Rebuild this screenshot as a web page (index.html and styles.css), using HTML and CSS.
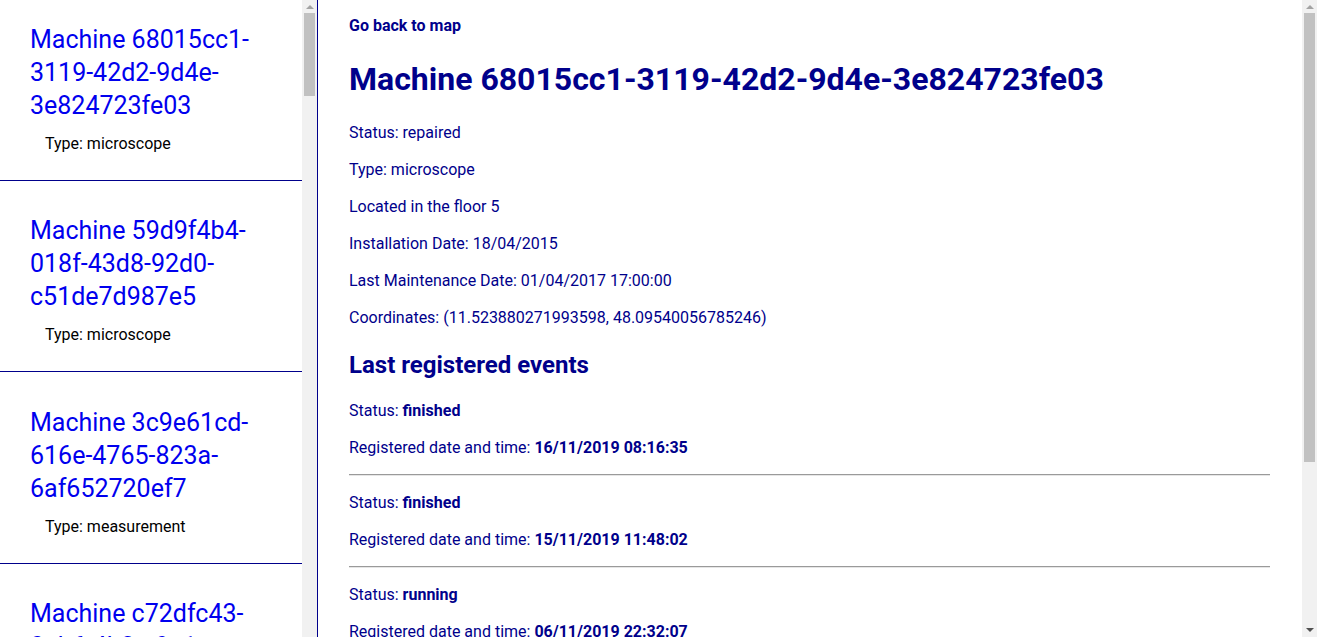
FILE: index.html
```html
<!DOCTYPE html>
<html lang="en">
<head>
<meta charset="utf-8">
<title>Machine 68015cc1-3119-42d2-9d4e-3e824723fe03</title>
<link rel="stylesheet" href="styles.css">
</head>
<body>
<div class="layout">
  <aside class="sidebar">
    <ul class="machine-list">
      <li class="machine-item"><a class="machine-link" href="#">Machine 68015cc1-3119-42d2-9d4e-3e824723fe03</a><p class="machine-type">Type: microscope</p></li>
      <li class="machine-item"><a class="machine-link" href="#">Machine 59d9f4b4-018f-43d8-92d0-c51de7d987e5</a><p class="machine-type">Type: microscope</p></li>
      <li class="machine-item"><a class="machine-link" href="#">Machine 3c9e61cd-616e-4765-823a-6af652720ef7</a><p class="machine-type">Type: measurement</p></li>
      <li class="machine-item"><a class="machine-link" href="#">Machine c72dfc43-0ab6-4b3a-9e1c-7d20f4a1b9c8</a><p class="machine-type">Type: measurement</p></li>
      <li class="machine-item"><a class="machine-link" href="#">Machine 1f0a7c2e-5b4d-4e8a-a3f1-92c6d8e0b7a4</a><p class="machine-type">Type: microscope</p></li>
      <li class="machine-item"><a class="machine-link" href="#">Machine 8e3b1d90-2c7f-4a65-b0d2-4f9e6a1c3d58</a><p class="machine-type">Type: measurement</p></li>
    </ul>
    <div class="scrollbar">
      <div class="scroll-btn scroll-up"></div>
      <div class="scroll-track"><div class="scroll-thumb sidebar-thumb"></div></div>
    </div>
  </aside>
  <div class="detail-wrap">
    <main class="detail">
      <a class="back-link" href="#">Go back to map</a>
      <h1 class="detail-title">Machine 68015cc1-3119-42d2-9d4e-3e824723fe03</h1>
      <p class="info">Status: repaired</p>
      <p class="info">Type: microscope</p>
      <p class="info">Located in the floor 5</p>
      <p class="info">Installation Date: 18/04/2015</p>
      <p class="info">Last Maintenance Date: 01/04/2017 17:00:00</p>
      <p class="info">Coordinates: (11.523880271993598, 48.09540056785246)</p>
      <h2 class="events-title">Last registered events</h2>
      <div class="event">
        <p class="info">Status: <b>finished</b></p>
        <p class="info">Registered date and time: <b>16/11/2019 08:16:35</b></p>
      </div>
      <hr class="divider">
      <div class="event">
        <p class="info">Status: <b>finished</b></p>
        <p class="info">Registered date and time: <b>15/11/2019 11:48:02</b></p>
      </div>
      <hr class="divider">
      <div class="event">
        <p class="info">Status: <b>running</b></p>
        <p class="info">Registered date and time: <b>06/11/2019 22:32:07</b></p>
      </div>
      <hr class="divider">
      <div class="event">
        <p class="info">Status: <b>idle</b></p>
        <p class="info">Registered date and time: <b>02/11/2019 14:05:51</b></p>
      </div>
    </main>
    <div class="scrollbar">
      <div class="scroll-btn scroll-up"></div>
      <div class="scroll-track"><div class="scroll-thumb detail-thumb"></div></div>
      <div class="scroll-btn scroll-down"></div>
    </div>
  </div>
</div>
</body>
</html>
```

FILE: styles.css
```css
html, body {
  margin: 0;
  padding: 0;
  height: 100%;
}

body {
  font-family: Roboto, "Liberation Sans", Arial, sans-serif;
  font-size: 16px;
  background: #fff;
  color: #00008b;
  overflow: hidden;
}

.layout {
  display: flex;
  height: 100vh;
}

/* ---------- fake classic scrollbars ---------- */
.scrollbar {
  flex: 0 0 15px;
  width: 15px;
  display: flex;
  flex-direction: column;
  background: #f1f1f1;
}

.scroll-btn {
  flex: 0 0 auto;
  display: flex;
  align-items: center;
  justify-content: center;
}

.scroll-up {
  height: 13px;
}

.scroll-down {
  height: 15px;
}

.scroll-up::before {
  content: "";
  border-left: 4px solid transparent;
  border-right: 4px solid transparent;
  border-bottom: 4px solid #a3a3a3;
}

.scroll-down::before {
  content: "";
  border-left: 4px solid transparent;
  border-right: 4px solid transparent;
  border-top: 4px solid #505050;
}

.scroll-track {
  flex: 1;
  padding: 0 2px;
}

.scroll-thumb {
  background: #c1c1c1;
}

.sidebar-thumb {
  height: 83px;
}

.detail-thumb {
  height: 449px;
}

/* ---------- sidebar ---------- */
.sidebar {
  flex: 0 0 317px;
  display: flex;
  border-right: 1px solid #00008b;
  overflow: hidden;
}

.machine-list {
  flex: 1;
  list-style: none;
  margin: 0;
  padding: 0;
  overflow: hidden;
}

.machine-item {
  padding: 33.5px 30px 27px 30px;
  border-bottom: 1px solid #00008b;
}

.machine-item:first-child {
  padding-top: 22.5px;
}

.machine-link {
  display: block;
  font-size: 25px;
  line-height: 33px;
  color: #0000ee;
  text-decoration: none;
}

.machine-type {
  margin: 12px 0 0 15px;
  line-height: 19px;
  color: #000;
}

/* ---------- detail ---------- */
.detail-wrap {
  flex: 1;
  display: flex;
  min-width: 0;
}

.detail {
  flex: 1;
  min-width: 0;
  overflow: hidden;
  padding: 0 32px 24px 31px;
}

.back-link {
  display: block;
  margin-top: 16px;
  line-height: 19px;
  font-weight: 700;
  color: #00008b;
  text-decoration: none;
}

.detail-title {
  font-size: 32px;
  line-height: 38px;
  font-weight: 700;
  margin: 25px 0 24px;
}

.info {
  margin: 16px 0;
  line-height: 21px;
}

.detail-title + .info {
  margin-top: 0;
}

.events-title {
  font-size: 24px;
  line-height: 28px;
  font-weight: 700;
  margin: 23px 0 21px;
}

.events-title + .event .info:first-child {
  margin-top: 0;
}

.divider {
  margin: 16px 0;
  border: 0;
  border-top: 1px solid #9a9a9a;
  border-bottom: 1px solid #e6e6e6;
  height: 0;
}
```
